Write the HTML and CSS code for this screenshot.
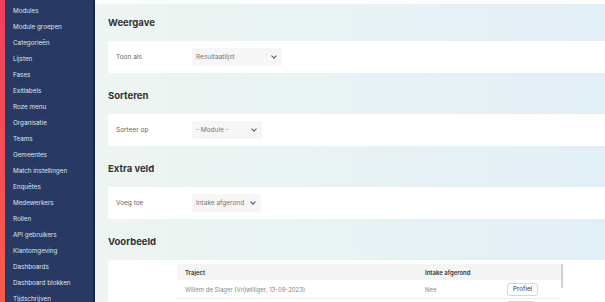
FILE: index.html
```html
<!DOCTYPE html>
<html>
<head>
  <title>Weergave instellingen</title>
  <meta name="viewport" content="width=device-width, initial-scale=1">
  <link rel="stylesheet" href="styles.css">
</head>
<body>
  <div id="app">
    <!-- Brand stripe + navigation -->
    <div class="brand-stripe"></div>
    <nav id="sidebar">
      <a class="nav-item">Modules</a>
      <a class="nav-item">Module groepen</a>
      <a class="nav-item">Categorieën</a>
      <a class="nav-item">Lijsten</a>
      <a class="nav-item">Fases</a>
      <a class="nav-item">Exitlabels</a>
      <a class="nav-item">Roze menu</a>
      <a class="nav-item">Organisatie</a>
      <a class="nav-item">Teams</a>
      <a class="nav-item">Gemeentes</a>
      <a class="nav-item">Match instellingen</a>
      <a class="nav-item">Enquêtes</a>
      <a class="nav-item">Medewerkers</a>
      <a class="nav-item">Rollen</a>
      <a class="nav-item">API gebruikers</a>
      <a class="nav-item">Klantomgeving</a>
      <a class="nav-item">Dashboards</a>
      <a class="nav-item">Dashboard blokken</a>
      <a class="nav-item">Tijdschrijven</a>
    </nav>

    <!-- Main settings area -->
    <main id="content">
      <section class="block first">
        <h2>Weergave</h2>
        <div class="card field-row">
          <span class="field-label">Toon als</span>
          <div class="select w-90">Resultaatlijst <span class="chev"></span></div>
        </div>
      </section>

      <section class="block">
        <h2>Sorteren</h2>
        <div class="card field-row">
          <span class="field-label">Sorteer op</span>
          <div class="select w-70">- Module - <span class="chev"></span></div>
        </div>
      </section>

      <section class="block">
        <h2>Extra veld</h2>
        <div class="card field-row">
          <span class="field-label">Voeg toe</span>
          <div class="select w-69">Intake afgerond <span class="chev"></span></div>
        </div>
      </section>

      <section class="block">
        <h2>Voorbeeld</h2>
        <div class="card preview">
          <div class="table-wrap">
            <table class="preview-table">
              <thead>
                <tr>
                  <th class="col-traject">Traject</th>
                  <th class="col-intake">Intake afgerond</th>
                  <th class="col-action"></th>
                </tr>
              </thead>
              <tbody>
                <tr>
                  <td>Willem de Slager (Vrijwilliger, 13-09-2023)</td>
                  <td>Nee</td>
                  <td><button class="btn-profile">Profiel</button></td>
                </tr>
                <tr class="row-next">
                  <td></td>
                  <td></td>
                  <td><button class="btn-profile btn-stub" aria-hidden="true"></button></td>
                </tr>
              </tbody>
            </table>
            <div class="scroll-thumb"></div>
          </div>
        </div>
      </section>
    </main>
  </div>
</body>
</html>
```

FILE: styles.css
```css
/* Base */
html, body {
  margin: 0;
  padding: 0;
  height: 100%;
  overflow: hidden;
  font-family: Inter, "Noto Sans", sans-serif;
  color: #333;
}
#app {
  display: flex;
  height: 302px;
}

/* Brand stripe */
.brand-stripe {
  width: 5px;
  flex-shrink: 0;
  background: linear-gradient(#f0405e, #f65c4a);
}

/* Sidebar navigation */
#sidebar {
  width: 88px;
  flex-shrink: 0;
  background: #283a63;
  border-right: 2px solid #17264a;
  padding-top: 3px;
  display: flex;
  flex-direction: column;
  overflow: hidden;
}
.nav-item {
  display: block;
  height: 16.1px;
  line-height: 16px;
  padding-left: 8px;
  font-size: 6.3px;
  color: #dfe5ef;
  white-space: nowrap;
}

/* Main content */
#content {
  flex: 1;
  overflow: hidden;
  border-top: 4px solid #fbfdfd;
  padding-left: 13px;
  background: linear-gradient(90deg, #eef5f2 0%, #e9f3f4 45%, #e3eff7 100%);
}
.block h2 {
  margin: 0;
  padding: 16px 0 12px;
  font-size: 9.5px;
  line-height: 13px;
  font-weight: 700;
  color: #333;
}
.block.first h2 {
  padding-top: 12px;
}
.card {
  background: #fff;
  border-radius: 2px;
  width: 520px;
}
.field-row {
  height: 32px;
  display: flex;
  align-items: center;
  padding-left: 8px;
  box-sizing: border-box;
}
.field-label {
  width: 76px;
  font-size: 6.5px;
  color: #666;
}
.select {
  height: 18px;
  box-sizing: border-box;
  background: #f6f6f6;
  border-radius: 2px;
  padding: 0 6px 0 4px;
  display: flex;
  align-items: center;
  justify-content: space-between;
  font-size: 6.5px;
  color: #777;
}
.w-90 { width: 90px; }
.w-70 { width: 70px; }
.w-69 { width: 69px; }
.chev {
  width: 3px;
  height: 3px;
  border-right: 1.2px solid #555;
  border-bottom: 1.2px solid #555;
  transform: rotate(45deg);
  margin-top: -2px;
}

/* Preview table */
.preview {
  height: 60px;
  padding: 4px 0 0 69px;
  box-sizing: border-box;
}
.table-wrap {
  position: relative;
  width: 386px;
}
.preview-table {
  width: 384px;
  border-collapse: collapse;
  font-size: 6px;
}
.preview-table th {
  background: #f5f5f5;
  height: 16px;
  text-align: left;
  font-weight: 600;
  color: #333;
  padding: 0 0 0 8px;
}
.preview-table td {
  height: 18px;
  padding: 0 0 0 8px;
  color: #888;
  border-bottom: 1px solid #eee;
}
.row-next td {
  vertical-align: top;
  padding-top: 2px;
}
.col-traject { width: 232px; }
.col-intake { width: 74px; }
.btn-profile {
  font-family: inherit;
  font-size: 6.3px;
  color: #333;
  background: #fff;
  border: 1px solid #d6d6d6;
  border-radius: 3px;
  padding: 0 5px;
  height: 13px;
  line-height: 11px;
}
.btn-stub {
  width: 28px;
}
.scroll-thumb {
  position: absolute;
  top: 0;
  right: 0;
  width: 2px;
  height: 24px;
  background: #cfcfcf;
  border-radius: 1px;
}
```
